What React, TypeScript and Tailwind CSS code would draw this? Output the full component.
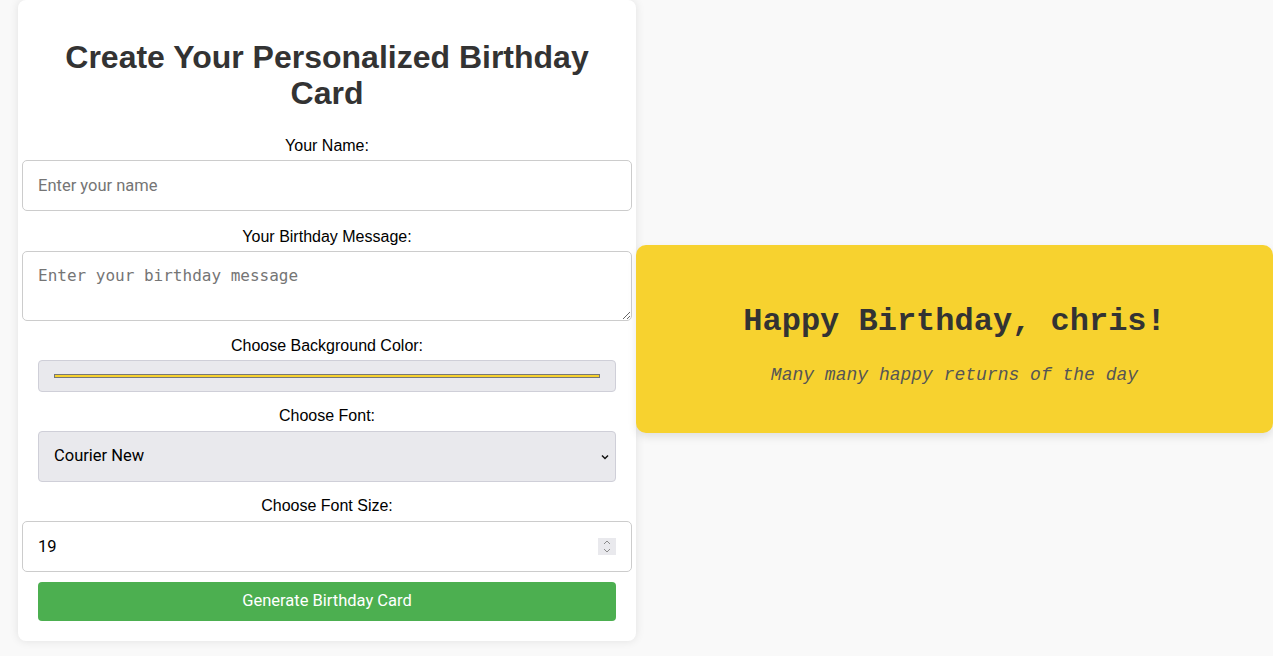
import * as React from "react"

const sans = "font-['Liberation_Sans',Arial,sans-serif]"
const ui = "font-['Roboto','Noto_Sans',sans-serif]"

function Label({ children, className = "" }: { children: React.ReactNode; className?: string }) {
  return (
    <label className={`block text-center text-base leading-[18px] text-black ${sans} ${className}`}>
      {children}
    </label>
  )
}

export default function App() {
  const [name, setName] = React.useState("")
  const [message, setMessage] = React.useState("")

  return (
    <div className="flex min-h-[656px] w-full items-start bg-[#f9f9f9]">
      {/* Form panel */}
      <div className="ml-[18px] flex w-[618px] flex-col rounded-lg bg-white px-5 pb-5 pt-5 shadow-[0_0_10px_rgba(0,0,0,0.1)]">
        <h1 className={`mb-[26px] mt-[19px] text-center text-[32px] font-bold leading-9 text-[#333] ${sans}`}>
          Create Your Personalized Birthday Card
        </h1>

        <Label className="mb-[5px]">Your Name:</Label>
        <input
          value={name}
          onChange={(e) => setName(e.target.value)}
          placeholder="Enter your name"
          className={`-mx-4 block h-[51px] rounded-[5px] border border-[#ccc] px-[15px] text-[16.5px] text-black outline-none placeholder:text-[#757575] ${ui}`}
        />

        <Label className="mb-[5px] mt-[17px]">Your Birthday Message:</Label>
        <textarea
          value={message}
          onChange={(e) => setMessage(e.target.value)}
          placeholder="Enter your birthday message"
          className="-mx-4 block h-[70px] rounded-[5px] border border-[#ccc] px-[15px] py-[14px] font-['DejaVu_Sans_Mono',monospace] text-base leading-[19px] text-black outline-none placeholder:text-[#757575]"
        />

        <Label className="mb-[5px] mt-4">Choose Background Color:</Label>
        <div className="flex h-[32px] items-center rounded-[4px] border border-[#cfcfd8] bg-[#e9e9ed] px-[15px]">
          <div className="h-[4px] w-full border border-[#777] bg-[#f7d22f]" />
        </div>

        <Label className="mb-[6px] mt-[15px]">Choose Font:</Label>
        <div className="relative">
          <select
            defaultValue="Courier New"
            className={`block h-[51px] w-full appearance-none rounded-[4px] border border-[#cfcfd8] bg-[#e9e9ed] px-[15px] text-[16.5px] text-black outline-none ${ui}`}
          >
            <option>Arial</option>
            <option>Courier New</option>
            <option>Georgia</option>
            <option>Times New Roman</option>
            <option>Verdana</option>
          </select>
          <svg className="pointer-events-none absolute right-[7px] top-[23px]" width="8" height="6" viewBox="0 0 8 6">
            <path d="M1 1.5 L4 4.5 L7 1.5" fill="none" stroke="#111" strokeWidth="1.5" />
          </svg>
        </div>

        <Label className="mb-[6px] mt-[15px]">Choose Font Size:</Label>
        <div className="relative -mx-4">
          <input
            type="text"
            defaultValue="19"
            className={`block h-[51px] w-full rounded-[5px] border border-[#ccc] px-[15px] text-[16.5px] text-black outline-none ${ui}`}
          />
          <div className="pointer-events-none absolute right-[16px] top-[17px] flex h-[17px] w-[18px] flex-col items-center justify-center gap-[3px] bg-[#e9e9ed]">
            <svg width="8" height="5" viewBox="0 0 8 5">
              <path d="M1 4 L4 1 L7 4" fill="none" stroke="#8a8a8a" strokeWidth="1" />
            </svg>
            <svg width="8" height="5" viewBox="0 0 8 5">
              <path d="M1 1 L4 4 L7 1" fill="none" stroke="#8a8a8a" strokeWidth="1" />
            </svg>
          </div>
        </div>

        <button
          className={`mt-[10px] h-[39px] rounded-[4px] bg-[#4caf50] text-[16.5px] text-white ${ui}`}
        >
          Generate Birthday Card
        </button>
      </div>

      {/* Card preview */}
      <div className="mt-[245px] flex h-[188px] w-[637px] flex-col items-center rounded-[10px] bg-[#f7d22f] pt-[59px] shadow-[0_4px_8px_rgba(0,0,0,0.1)]">
        <h2 className="text-center font-['Liberation_Mono','Courier_New',monospace] text-[32px] font-bold leading-9 text-[#333]">
          Happy Birthday, {name || "chris"}!
        </h2>
        <p className="mt-[25px] text-center font-['Liberation_Mono','Courier_New',monospace] text-[18px] italic leading-[21px] text-[#555]">
          {message || "Many many happy returns of the day"}
        </p>
      </div>
    </div>
  )
}
